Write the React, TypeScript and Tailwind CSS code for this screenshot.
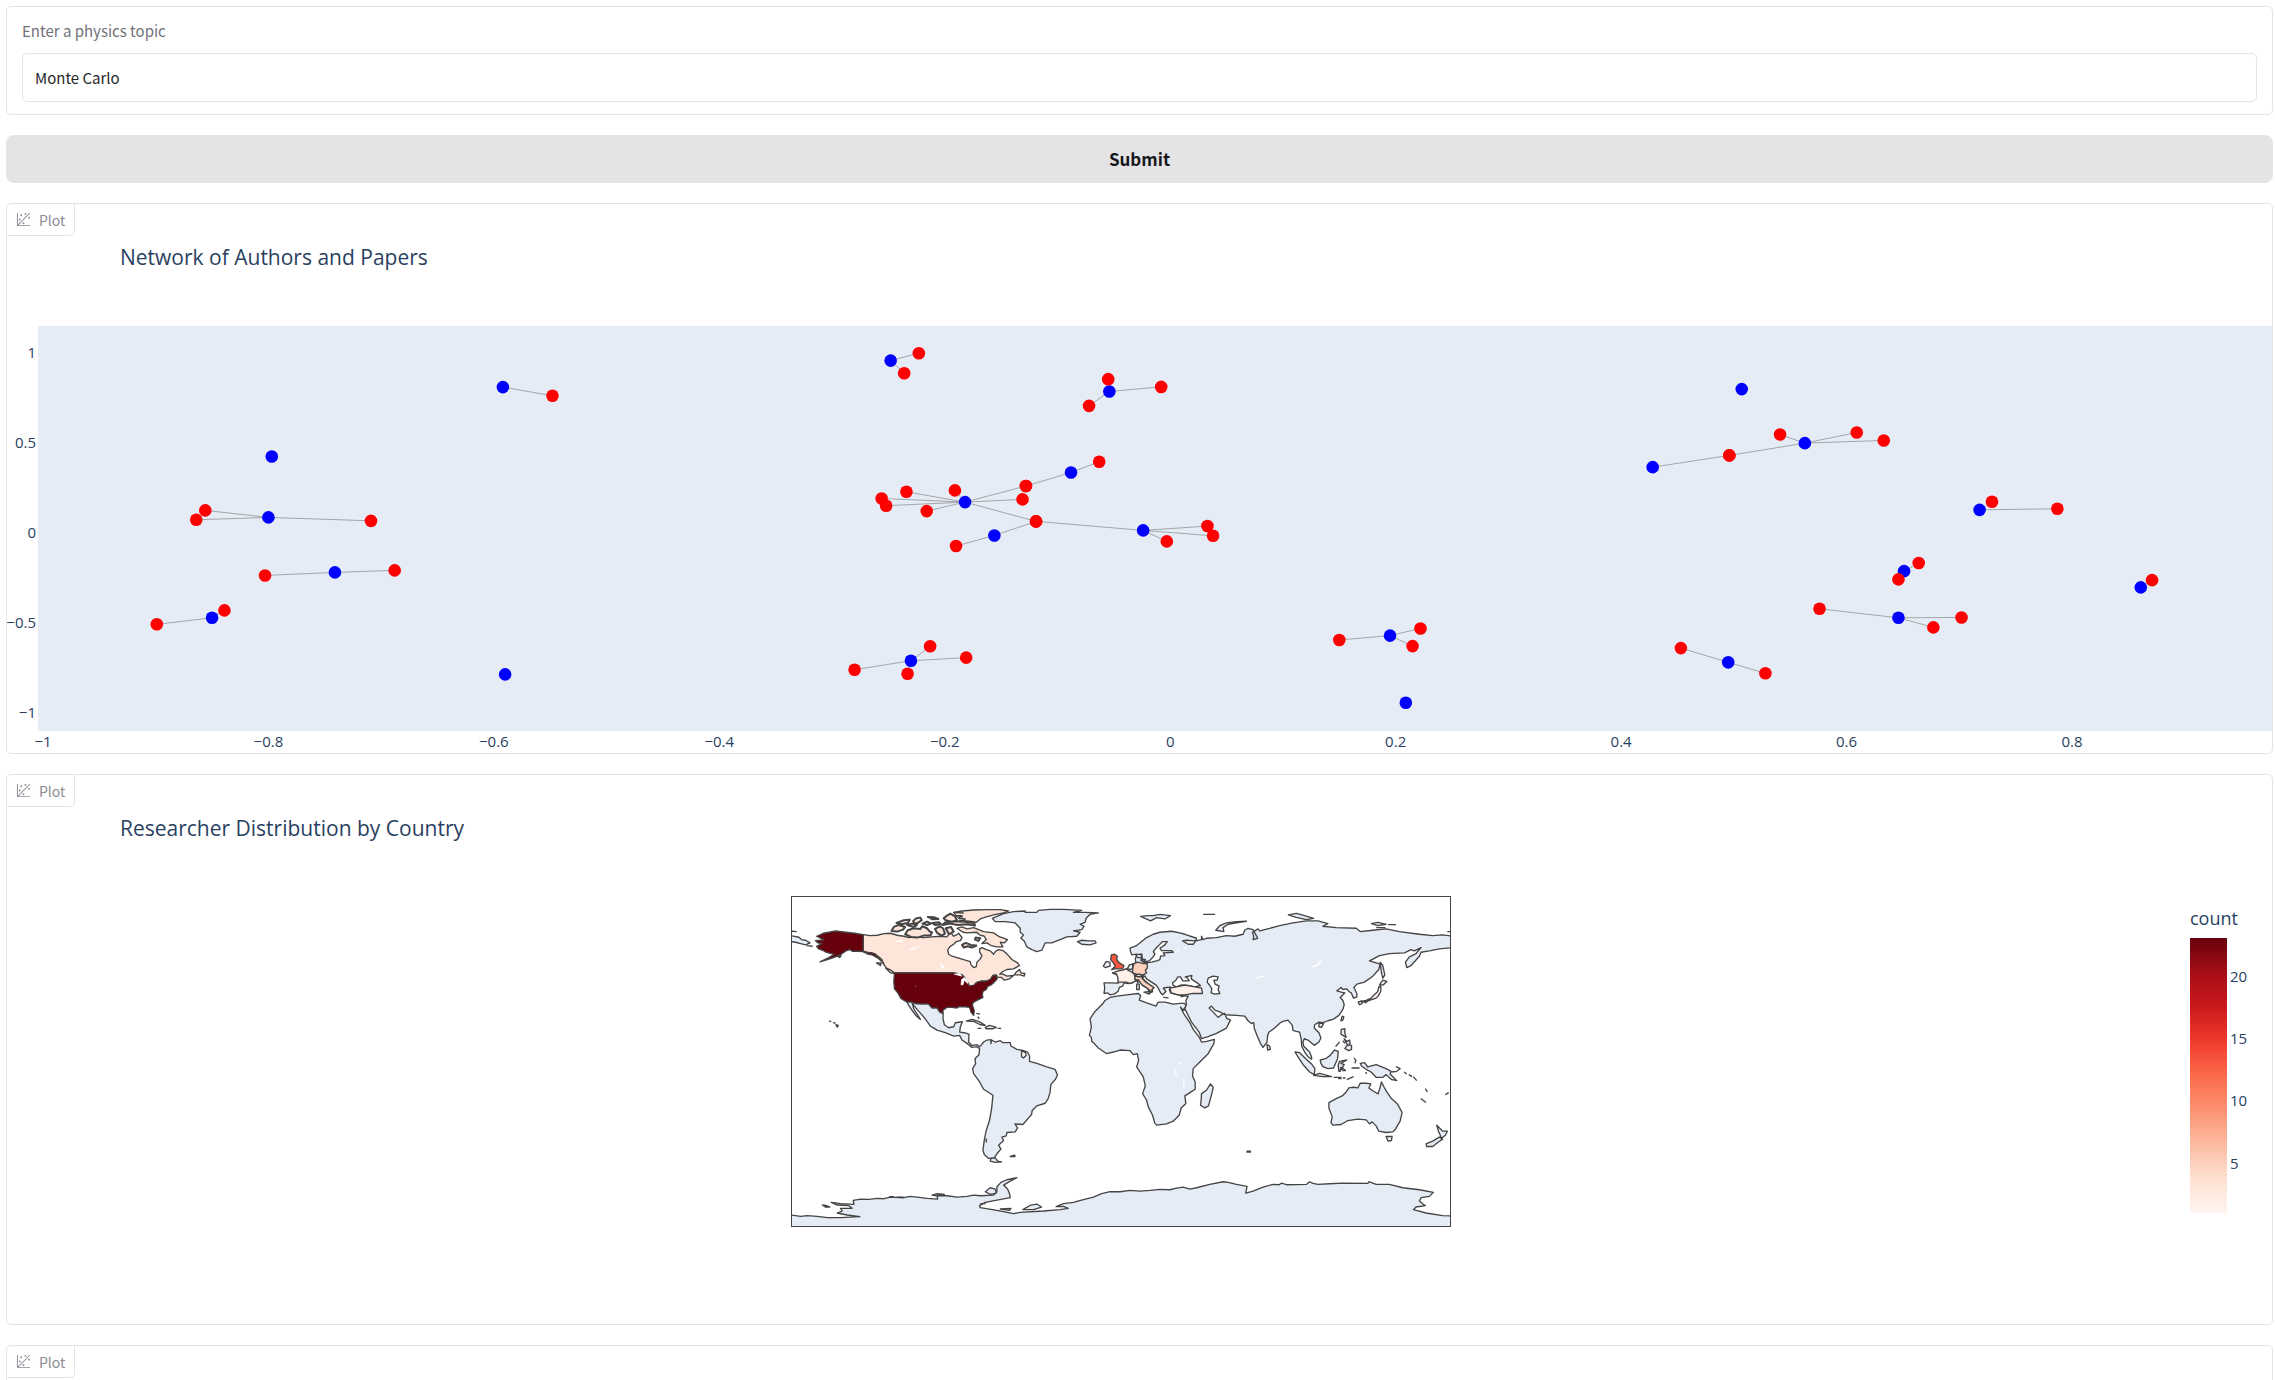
import { useState } from "react";

type Point = [number, number];

// each paper with the authors linked to it
const papers: { at: Point; authors: Point[] }[] = [
  { at: [-0.592, 0.81], authors: [[-0.548, 0.762]] },
  { at: [-0.797, 0.425], authors: [] },
  { at: [-0.8, 0.087], authors: [[-0.856, 0.126], [-0.864, 0.074], [-0.709, 0.068]] },
  { at: [-0.741, -0.218], authors: [[-0.803, -0.235], [-0.688, -0.207]] },
  { at: [-0.85, -0.47], authors: [[-0.899, -0.506], [-0.839, -0.429]] },
  { at: [-0.59, -0.784], authors: [] },
  { at: [-0.248, 0.957], authors: [[-0.223, 0.998], [-0.236, 0.887]] },
  { at: [-0.054, 0.786], authors: [[-0.055, 0.854], [-0.008, 0.811], [-0.072, 0.706]] },
  { at: [-0.088, 0.336], authors: [[-0.063, 0.396], [-0.128, 0.261]] },
  {
    at: [-0.182, 0.172],
    authors: [
      [-0.191, 0.237],
      [-0.234, 0.229],
      [-0.256, 0.192],
      [-0.252, 0.152],
      [-0.216, 0.122],
      [-0.128, 0.261],
      [-0.131, 0.187],
      [-0.119, 0.065],
    ],
  },
  { at: [-0.156, -0.013], authors: [[-0.19, -0.072], [-0.119, 0.065]] },
  { at: [-0.024, 0.015], authors: [[-0.119, 0.065], [0.033, 0.039], [0.038, -0.015], [-0.003, -0.046]] },
  { at: [-0.23, -0.708], authors: [[-0.213, -0.628], [-0.28, -0.758], [-0.233, -0.78], [-0.181, -0.691]] },
  { at: [0.195, -0.569], authors: [[0.15, -0.593], [0.222, -0.529], [0.215, -0.627]] },
  { at: [0.209, -0.941], authors: [] },
  { at: [0.507, 0.799], authors: [] },
  { at: [0.563, 0.499], authors: [[0.541, 0.547], [0.609, 0.558], [0.633, 0.514], [0.496, 0.431]] },
  { at: [0.428, 0.366], authors: [[0.496, 0.431]] },
  { at: [0.718, 0.129], authors: [[0.729, 0.174], [0.787, 0.135]] },
  { at: [0.651, -0.211], authors: [[0.664, -0.166], [0.646, -0.257]] },
  { at: [0.861, -0.301], authors: [[0.871, -0.261]] },
  { at: [0.646, -0.47], authors: [[0.576, -0.42], [0.677, -0.523], [0.702, -0.468]] },
  { at: [0.495, -0.717], authors: [[0.453, -0.638], [0.528, -0.778]] },
];

const xTicks = [-1, -0.8, -0.6, -0.4, -0.2, 0, 0.2, 0.4, 0.6, 0.8];
const yTicks = [1, 0.5, 0, -0.5, -1];

const xRange = [-1.0044, 0.9774];
const yRange = [-1.098, 1.149];

const px = (x: number) => `${((x - xRange[0]) / (xRange[1] - xRange[0])) * 100}%`;
const py = (y: number) => `${((yRange[1] - y) / (yRange[1] - yRange[0])) * 100}%`;
const label = (n: number) => String(n).replace("-", "−");

const NetworkPlot = () => (
  <div className="mt-[53px] font-['Open_Sans',sans-serif] text-[15px]">
    <div className="flex h-[405px]">
      <svg className="h-full w-[31px] shrink-0 overflow-visible">
        {yTicks.map((t) => (
          <text key={t} x="29" y={py(t)} dy="5" textAnchor="end" fill="#2a3f5f">
            {label(t)}
          </text>
        ))}
      </svg>
      <svg className="h-full min-w-0 flex-1 bg-[#e5ecf6]">
        {papers.map((p) =>
          p.authors.map((a, i) => (
            <line
              key={`${p.at}-${i}`}
              x1={px(p.at[0])}
              y1={py(p.at[1])}
              x2={px(a[0])}
              y2={py(a[1])}
              stroke="#888"
              strokeWidth="0.7"
            />
          ))
        )}
        {papers.map((p) => (
          <circle key={`${p.at}`} cx={px(p.at[0])} cy={py(p.at[1])} r="6.3" fill="#0000ff" />
        ))}
        {papers.map((p) =>
          p.authors.map((a, i) => (
            <circle key={`${p.at}-${i}`} cx={px(a[0])} cy={py(a[1])} r="6.3" fill="#ff0000" />
          ))
        )}
      </svg>
    </div>
    <div className="pl-[31px]">
      <svg className="block h-[22px] w-full overflow-visible">
        {xTicks.map((t) => (
          <text key={t} x={px(t)} y="16" textAnchor="middle" fill="#2a3f5f">
            {label(t)}
          </text>
        ))}
      </svg>
    </div>
  </div>
);

const WorldMap = () => (
  <svg
    viewBox="34 34 1978 988"
    className="block w-[660px] border border-[#444] bg-white"
    fill="#e5ecf6"
    stroke="#444"
    strokeWidth="4"
    strokeLinejoin="round"
  >
    {/* Antarctica */}
    <path d="M30,990 60,994 80,992 110,994 140,998 180,998 238,995 200,990 170,984 185,978 180,970 215,970 205,962 170,960 152,952 180,956 220,958 218,946 240,942 265,943 290,940 310,941 330,936 370,938 390,934 410,936 440,940 472,942 470,932 500,932 530,936 560,934 580,930 600,932 640,930 650,920 650,905 662,892 680,884 710,878 690,888 670,900 682,912 688,926 690,938 650,945 615,952 598,962 600,968 650,976 700,986 720,982 790,978 840,974 864,970 850,964 828,965 850,956 880,952 910,944 940,936 965,926 990,920 1020,920 1050,916 1080,918 1110,916 1140,913 1170,914 1190,909 1210,906 1230,912 1250,908 1290,898 1330,890 1345,892 1370,898 1402,904 1398,924 1420,918 1450,906 1480,898 1498,899 1506,894 1520,899 1580,898 1590,890 1600,895 1615,898 1650,896 1690,894 1765,895 1768,890 1790,898 1830,898 1870,908 1920,914 1962,922 1950,934 1925,938 1920,948 1930,956 1938,962 1910,966 1902,974 1940,984 1990,992 2020,993 2020,1040 30,1040Z" />
    <path d="M125,960 138,962 148,966 134,966ZM326,935H340M350,936H370M455,930 470,926 492,928 465,932ZM615,920 630,908 645,912 648,924 630,928ZM600,956H616M660,972 692,970 688,976ZM728,974 752,960 770,957 784,966 760,974Z" />

    {/* Canada and the Arctic islands */}
    <g fill="#fee5d9">
      <path d="M248,147 268,150 290,149 310,144 330,143 350,149 370,152 385,156 400,154 430,156 455,154 480,152 500,154 505,146 512,142 520,152 528,148 535,143 545,156 540,165 528,168 520,176 508,184 502,194 505,206 515,212 535,218 555,224 570,228 572,238 580,246 588,243 590,230 600,220 605,210 598,200 598,190 605,186 618,192 630,196 640,206 645,198 655,192 668,195 680,205 695,222 712,232 718,240 700,250 680,252 668,258 658,266 668,266 680,272 700,270 688,280 672,284 664,276 652,275 648,268 638,270 630,282 618,287 603,287 592,290 580,298 566,300 560,285 545,268 530,264 520,262 342,262 330,255 318,248 308,234 304,222 290,210 272,202 248,198Z" />
      <path d="M702,268 708,260 718,252 722,262 734,264 732,272 720,268Z" />
      <g strokeWidth="6">
        <path d="M374,146 382,134 400,128 420,130 425,122 440,128 448,138 455,140 450,150 430,150 410,156 392,154Z" />
        <path d="M333,136 340,124 355,118 374,124 368,132 350,138Z" />
        <path d="M348,112 370,104 388,102 382,112 362,116ZM380,118 395,114 410,118 400,124ZM398,106 408,98 420,96 424,104 412,112 402,114ZM442,94 460,95 474,100 456,101ZM426,114 440,108 452,114 440,118ZM456,112 476,110 482,116 464,118Z" />
        <path d="M464,130 478,122 488,128 494,144 484,150 470,142ZM496,128 512,124 520,138 506,146Z" />
        <path d="M486,118 510,114 532,118 560,116 584,120 582,112 550,108 520,108 495,110Z" />
        <path d="M490,98 500,90 510,84 524,92 530,104 514,108 496,104Z" />
        <path d="M545,178 556,172 572,178 588,180 575,186 562,182 550,186ZM586,156 600,158 594,166 584,162Z" />
      </g>
      <path d="M520,80 545,76 580,73 620,72 660,72 685,76 670,82 640,88 618,94 600,100 588,110 560,108 540,108 555,100 535,98 545,90 528,90Z" />
      <path d="M520,80 550,82M524,94 548,94M536,104 580,108" />
      <path d="M530,128 545,124 560,130 580,126 595,132 610,138 640,142 655,152 682,162 672,172 660,170 668,184 650,184 632,180 620,172 605,174 618,162 612,152 598,148 590,140 560,142 548,140Z" />
      <path d="M316,248 328,252 344,264 330,262ZM288,232H302L300,240Z" />
    </g>

    {/* United States */}
    <g fill="#67000d">
      <path d="M248,147 222,143 195,140 165,136 145,140 128,143 118,148 108,152 124,160 130,163 104,165 112,172 124,174 108,182 114,190 128,195 136,200 146,203 160,206 145,216 118,229 150,219 172,211 186,203 196,196 208,192 215,197 232,197 248,198 262,206 275,208 290,216 304,228 310,234 298,220 284,205 272,201 262,202 248,196Z" />
      <path d="M170,212 182,208 178,216ZM145,406 152,409M158,411 165,414M166,418 173,420 170,425Z" />
      <path d="M342,262H520L530,266 545,268 552,275 560,288 566,300 580,298 592,290 603,287 618,287 630,282 638,270 648,270 651,280 640,292 633,298 622,303 618,312 608,318 606,328 608,336 596,342 580,350 576,358 582,376 580,390 572,380 568,366 555,364 535,364 530,368 515,366 500,366 488,374V385L478,380 470,368H455L444,356H425L408,355 392,350H380L362,340 352,322 342,310 340,290Z" />
    </g>

    {/* Mexico to Cape Horn */}
    <path d="M380,350H392L408,355 425,356H444L455,368H470L478,380 488,385V400L492,418 505,427 520,424 525,412 546,409 540,425 538,440 552,442 566,446 565,470 575,480 590,478 598,484 602,480 610,470 620,464 632,463V475L634,464 645,470 660,466 668,472 690,472 692,482 710,492 728,495 742,500 748,512V528L770,534 800,545 825,552 832,570 826,582 812,598 810,620 804,640 795,654 770,662 756,676 754,688 740,704 728,718 704,716 712,728 705,740 680,742 678,752 665,756 670,766 655,780 662,792 650,806 642,818 625,820 612,808 608,795 612,765 618,735 628,705 634,670 638,630 610,612 598,590 580,565 577,550 586,535 584,520 596,508 598,490 590,484 575,486 560,474 545,464 538,450 520,452 495,442 470,434 450,422 440,408 428,392 412,374 402,362 395,352 400,370 420,402 408,392 396,376 385,360Z" />
    <path d="M632,820 645,818 652,828 664,830 645,832 630,828ZM690,814 704,810V814ZM618,760V772" />
    <path d="M558,407 575,402 595,408 615,420 600,418 580,408ZM615,426 628,420 648,426 638,430H618ZM592,429H603M652,429H663M588,384 599,386M592,394 597,400" />
    <path fill="#fff5f0" d="M724,496 736,502 738,510 730,518 724,514Z" />

    {/* Greenland, Iceland, tip of Chukotka */}
    <path d="M636,98 670,84 700,78 735,76V80H770L775,74 810,71 850,71 905,74 880,80 915,80 955,82 930,86 918,98 915,110 900,116 912,122 905,132 880,136 900,140 890,152 860,154 840,162 815,172 795,172 785,194 770,198 755,192 740,184 732,166 722,158 730,148 720,140 720,128 705,112 675,108 645,108Z" />
    <path d="M892,168 905,164 925,166 945,166 948,172 930,178 905,176Z" />
    <path d="M30,150 55,155 62,162 75,164 88,172 75,178 60,174 45,170 30,168ZM34,137 48,138M78,180 96,182" />

    <g transform="translate(990 0)">
      {/* Eurasia */}
      <path d="M-18,292H0L25,293V280L22,268 8,263 25,258 35,260 40,254 50,250 60,246 68,236 78,232 76,220 80,208 96,206V216L92,224 105,232 125,230 140,226 150,222 152,212 165,210 160,202 190,200 185,195 155,195 150,188 165,178 172,168 158,168 148,178 138,188 130,198 135,206 128,216 118,226 105,228 98,222 94,210 80,206 66,208 62,200 60,188 80,180 95,168 110,156 130,146 150,140 185,137 210,142 225,146 260,158 258,166 230,164 218,166 235,176 250,176 258,166 275,162V152L280,162 290,158 320,156 350,150 375,152 400,146 405,134 415,128 430,132 444,158 430,162 432,152 428,140 445,130 450,136 480,128 510,120 550,112 590,106 625,106 655,114 640,122 680,126 740,128 752,138 790,134 830,130 870,138 930,146 970,150 1000,148 1030,152V186L990,190 960,196 935,200 930,212 905,240 892,246 888,230 900,214 920,204 935,186 915,196 905,192 885,202 840,204 810,210 780,226 800,232 812,236 808,252 790,272 765,290 742,296 733,306 742,324V334L732,338 725,322 718,318 712,310 700,312 695,306 682,316 695,320 706,322 692,336 700,345 704,358 700,372 688,390 670,402 655,406 640,412 628,410 615,418 614,428 628,442 634,458 628,470 614,480 605,472 595,464 584,460 580,470 582,482 590,490 600,500 606,516V522L595,514 585,500 576,482 575,462 570,440 560,438 550,435 548,420 535,404 520,408 512,412 495,428 478,440 474,450 472,470 460,486 452,474 442,450 434,430 432,412 425,414 415,406 405,392 380,390 345,388 332,380 315,374 305,362 298,368 310,380 325,396 335,388 345,384 350,398 362,404 350,428 320,444 295,454 275,460 268,440 245,410 235,390 225,370 222,375 230,355 228,345 235,332 212,330 195,326 182,322 178,312 182,305 170,306 160,308 168,318 158,328 152,322 145,308 138,298 125,290 110,280 105,272 95,276 105,286 118,298 132,306 126,312 128,318 120,322 112,308 98,300 88,286 78,282 68,292 55,294 42,292 38,302 28,306 24,318 12,326 0,328 -8,322 -18,324 -16,306Z" />
      {/* Africa */}
      <path d="M0,336 20,332 50,328 85,324 92,330 88,344 110,352 138,362 145,350 165,350 190,356 210,354 225,354 228,362 220,374 212,365 222,385 240,412 250,432 268,455 275,470 290,468 314,462 312,475 295,505 270,530 250,550 248,572 256,590V612L240,622 225,632 228,655 214,668 208,690 190,708 170,716 140,720 134,712 128,690 115,665 110,645 98,625 106,602 100,575 80,545 86,525 82,505 70,508 60,496 30,494 10,500 -10,505 -35,488 -48,474 -55,468 -56,456 -62,450 -56,425 -60,400 -45,378 -22,355 -15,345Z" />
      <path d="M302,596 310,606 306,625 296,662 285,668 272,660 274,645 275,625 290,615Z" />

      {/* inland seas */}
      <g fill="#fff">
        <path d="M190,300 188,292 198,284 204,274 212,274 218,286 238,286 232,276 226,274 246,270 244,280 262,292 272,300 255,304 235,300 215,298 200,304Z" />
        <path d="M292,290 295,278 310,272 325,274 322,284 312,284 316,296 328,302 325,312 330,324 315,326 304,322 306,310 300,300Z" />
      </g>

      {/* European and Asian countries with data */}
      <path fill="#fff0ea" d="M180,308 200,304 225,299 255,304 275,308 278,324 250,324 225,328 205,328 184,322Z" />
      <path fill="#fff0ea" d="M8,262 25,256 38,254 48,250 72,264 74,272 76,288 60,294 48,290 24,290V278L20,266Z" />
      <path fill="#fdcfbd" d="M72,234 84,230 100,234 112,234V248L106,254 110,262 100,268 80,266 68,262V248Z" />
      <path fill="#fdcfbd" d="M74,272 90,274 104,272 96,278 108,290 132,306 126,312 126,320 112,308 96,298 86,284 76,282ZM102,320 122,318 118,326Z" />
      <path d="M52,250 58,238 68,236V248L62,252ZM74,268 90,266 100,270 84,274ZM78,208 92,206 96,216 82,216ZM96,222 106,222 102,230Z" />
      <path fill="#f6573e" d="M4,208 14,206 22,212 20,222 28,232 42,240 38,250 15,250 5,252 16,242 10,232 2,222Z" />
      <path fill="#fff0ea" d="M748,350 770,345 785,338 792,330 805,318 808,304 814,302V318L806,332 800,338 775,346 758,350ZM810,298 820,284 832,288 822,298Z" />
      <path d="M746,350 756,346 758,354 750,358ZM764,348 776,346 768,352Z" />
      <path d="M-20,242 -12,228 0,230V242L-14,246ZM80,296H88V312H80ZM80,286 84,284V292ZM212,334 224,331M160,336 176,337" />

      {/* southern and eastern islands */}
      <path d="M472,478 480,482 482,492 474,494ZM628,414H642L636,426 628,424ZM698,392 703,394 700,404 694,406ZM812,230 820,240 826,268 820,278 816,262Z" />
      <path d="M695,432 706,430V444L710,456 700,450 694,446ZM704,460 712,468 720,464 722,474 716,480 710,472ZM706,490 714,478 726,480V492L718,496ZM700,466 706,474M678,484 690,470" />
      <path d="M632,524 648,520 662,510 675,494 686,498 684,520 672,548 655,550 640,544 634,534Z" />
      <path d="M556,500 570,502 590,522 605,535 616,550 614,568 600,560 582,540 570,522ZM612,570 630,564 666,574 640,574ZM672,576H696M686,580H696M700,578H708M712,583 732,574" />
      <path d="M688,558 686,540 690,528 712,524 694,534 704,538 698,546 708,556 700,556 694,546 692,558ZM734,518 739,526 736,534M726,548H750M770,560V566" />
      <path d="M752,534 765,532 775,545 800,538 830,550 845,558 842,566 862,586 845,582 830,568 820,576 800,576 785,560 770,552 756,542Z" />
      <path fill="none" d="M846,560 862,558 872,550 860,544M884,560 892,566M898,568 908,574M912,574 922,586M948,610 954,620M934,640 950,652M1008,628 1018,622M412,798H422V801H412Z" />
      <path d="M658,652 680,640 698,632 710,620 718,608 732,606 745,608 752,594 770,594 784,596 778,608 792,618 806,626 812,606 816,590 824,606 832,620 846,640 864,656 878,682 872,708 858,732 850,740 830,742 808,738 800,722 788,710 780,716 770,704 745,702 715,706 695,718 670,720 664,712 668,695 658,668Z" />
      <path d="M830,754H848L846,766 836,768ZM982,720 992,730 1000,738 1014,738 1008,750 996,760 992,748 988,740ZM990,756 1000,762 985,772 970,784 952,784 950,776 970,768Z" />

      {/* Arctic coast islands */}
      <path d="M92,92 115,90 130,90 150,86 182,90 165,100 140,96 122,106ZM280,86H316M318,134 330,120 350,112 380,108 410,107 380,112 355,116 340,126 342,138ZM536,88 560,83 585,90 612,98 590,102 560,95ZM786,114 805,110 830,116 805,120ZM836,117H860M800,126H828M1014,138H1024" />
      <path
        fill="none"
        stroke="#fff"
        d="M606,244Q628,242 634,224M438,278Q450,272 466,274M356,281H362M208,536 216,532M195,550Q196,565 203,574M222,582V604M202,192 210,196M224,190 230,186"
      />
    </g>

    {/* North American lakes */}
    <path
      fill="#fff"
      stroke="#fff"
      strokeWidth="2"
      d="M345,168 362,163 368,168ZM385,192 410,185 395,194ZM412,185 418,182ZM478,232 488,240 494,250 486,248ZM522,266 538,264 545,272ZM542,298 544,282 552,276 562,284V294L552,284 548,298ZM460,212 464,215ZM568,298 582,295ZM404,302H406"
    />
  </svg>
);

const countTicks = [
  { value: 20, className: "top-[28px]" },
  { value: 15, className: "top-[90px]" },
  { value: 10, className: "top-[152px]" },
  { value: 5, className: "top-[215px]" },
];

const CountryPlot = () => (
  <div className="mt-[52px] flex h-[427px] items-start pl-11 font-['Open_Sans',sans-serif] text-[#2a3f5f]">
    <div className="flex flex-1 justify-center">
      <WorldMap />
    </div>
    <div className="w-[82px] shrink-0 pt-2">
      <div className="h-[34px] text-[18px] leading-7">count</div>
      <div className="relative h-[275px] w-[37px] bg-[linear-gradient(to_top,#fff5f0,#fee0d2,#fcbba1,#fc9272,#fb6a4a,#ef3b2c,#cb181d,#a50f15,#67000d)]">
        {countTicks.map((t) => (
          <span key={t.value} className={`absolute left-10 text-[15px] leading-5 ${t.className}`}>
            {t.value}
          </span>
        ))}
      </div>
    </div>
  </div>
);

const PlotIcon = () => (
  <svg viewBox="0 0 32 32" className="h-[15px] w-[15px]" fill="currentColor">
    <circle cx="20" cy="4" r="2" />
    <circle cx="8" cy="16" r="2" />
    <circle cx="28" cy="12" r="2" />
    <circle cx="11" cy="7" r="2" />
    <circle cx="16" cy="24" r="2" />
    <path d="M30 3.413L28.586 2L4 26.585V2H2v26a2 2 0 0 0 2 2h26v-2H5.413Z" />
  </svg>
);

const PlotCard = ({ title, children }: { title?: string; children?: React.ReactNode }) => (
  <section className="min-h-[551px] shrink-0 overflow-hidden rounded-[5px] border border-[#e4e4e7] bg-white">
    <div className="flex h-8 w-[68px] items-center gap-2 rounded-br-[5px] border-r border-b border-[#e4e4e7] pl-[9px] text-sm text-[#8b8b94]">
      <PlotIcon />
      <span>Plot</span>
    </div>
    {title && (
      <h2 className="mt-[5px] pl-[113px] font-['Open_Sans',sans-serif] text-[21px] leading-8 text-[#2a3f5f]">
        {title}
      </h2>
    )}
    {children}
  </section>
);

const App = () => {
  const [topic, setTopic] = useState("Monte Carlo");

  return (
    <main className="flex h-screen flex-col gap-5 overflow-hidden bg-white pt-[6px] pr-[2px] pl-[6px] font-['Noto_Sans_CJK_SC',sans-serif]">
      <div className="h-[109px] shrink-0 rounded-[5px] border border-[#e4e4e7] px-[15px] pt-3">
        <label htmlFor="topic" className="block text-[15px] leading-6 text-[#71717a]">
          Enter a physics topic
        </label>
        <input
          id="topic"
          value={topic}
          onChange={(e) => setTopic(e.target.value)}
          className="mt-[10px] h-[49px] w-full rounded-[5px] border border-[#e4e4e7] px-3 text-[15px] text-[#27272a]"
        />
      </div>

      <button className="h-12 shrink-0 rounded-lg bg-[#e4e4e7] text-[17px] font-bold text-[#18181b]">
        Submit
      </button>

      <PlotCard title="Network of Authors and Papers">
        <NetworkPlot />
      </PlotCard>

      <PlotCard title="Researcher Distribution by Country">
        <CountryPlot />
      </PlotCard>

      <PlotCard />
    </main>
  );
};

export default App;
